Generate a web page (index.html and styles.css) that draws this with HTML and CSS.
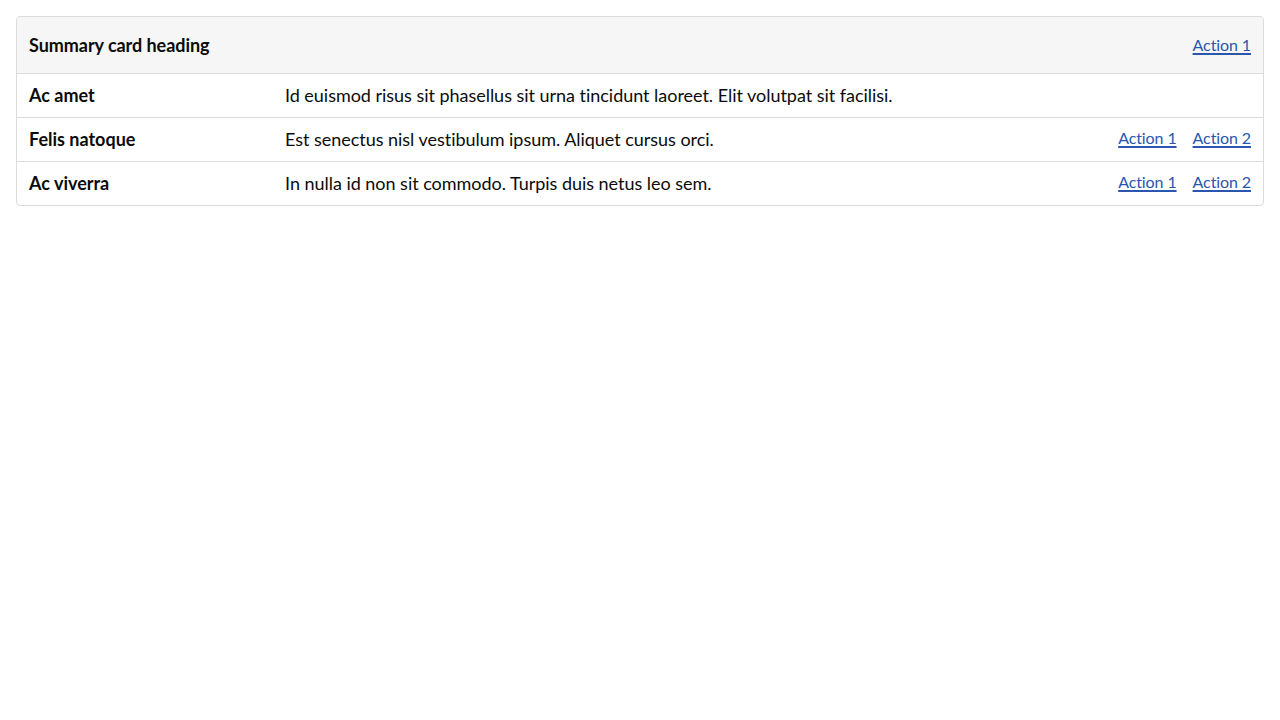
FILE: index.html
```html
<!DOCTYPE html>
<html lang="en">
<head>
<meta charset="utf-8">
<title>Summary card</title>
<link rel="stylesheet" href="styles.css">
</head>
<body>
<section class="card">
  <header class="card-header">
    <h2 class="card-title">Summary card heading</h2>
    <div class="actions"><a href="#">Action 1</a></div>
  </header>
  <dl class="list">
    <div class="row">
      <dt class="key">Ac amet</dt>
      <dd class="value">Id euismod risus sit phasellus sit urna tincidunt laoreet. Elit volutpat sit facilisi.</dd>
      <dd class="actions"></dd>
    </div>
    <div class="row">
      <dt class="key">Felis natoque</dt>
      <dd class="value">Est senectus nisl vestibulum ipsum. Aliquet cursus orci.</dd>
      <dd class="actions"><a href="#">Action 1</a><a href="#">Action 2</a></dd>
    </div>
    <div class="row">
      <dt class="key">Ac viverra</dt>
      <dd class="value">In nulla id non sit commodo. Turpis duis netus leo sem.</dd>
      <dd class="actions"><a href="#">Action 1</a><a href="#">Action 2</a></dd>
    </div>
  </dl>
</section>
</body>
</html>
```
FILE: styles.css
```css
* { box-sizing: border-box; }
body {
  margin: 0;
  padding: 16px;
  font-family: Lato, "Open Sans", sans-serif;
  color: #0b0c0c;
  background: #fff;
}
.card {
  border: 1px solid #dcdcdc;
  border-radius: 4px;
  overflow: hidden;
}
.card-header {
  display: flex;
  align-items: center;
  justify-content: space-between;
  height: 57px;
  padding: 0 12px;
  background: #f6f6f6;
  border-bottom: 1px solid #dcdcdc;
}
.card-title {
  margin: 0;
  font-size: 18px;
  line-height: 24px;
  font-weight: 700;
  letter-spacing: -0.05px;
}
.list { margin: 0; }
.row {
  display: flex;
  align-items: center;
  height: 44px;
  padding: 0 12px 2px;
  border-bottom: 1px solid #dcdcdc;
}
.row:last-child { border-bottom: 0; height: 43px; }
.key {
  width: 256px;
  flex: none;
  font-size: 18px;
  line-height: 24px;
  font-weight: 700;
}
.value {
  margin: 0;
  flex: 1;
  font-size: 18px;
  line-height: 24px;
  letter-spacing: -0.03px;
}
.actions {
  margin: 0;
  display: flex;
  gap: 16px;
  font-size: 16px;
  line-height: 24px;
}
.row .actions { margin-bottom: 2px; }
.actions a {
  color: #2a56b0;
  text-decoration: underline;
  text-decoration-thickness: 1.5px;
  text-underline-offset: 2px;
  letter-spacing: -0.1px;
}
```
